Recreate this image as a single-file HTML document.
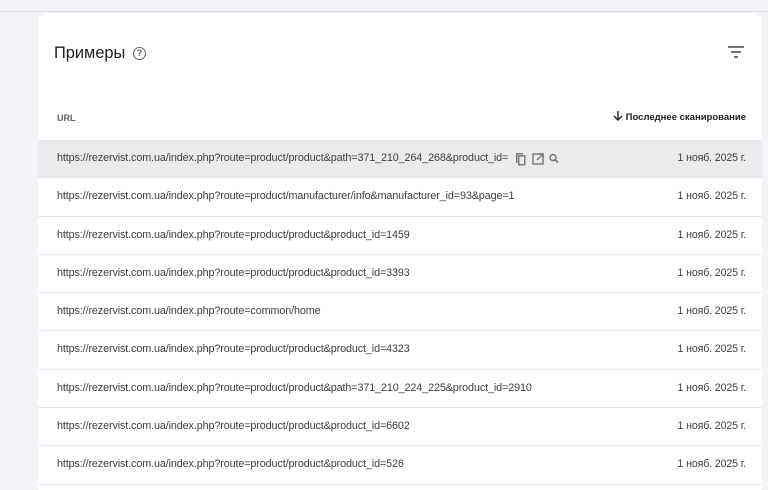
<!DOCTYPE html>
<html><head><meta charset="utf-8"><style>
*{margin:0;padding:0;box-sizing:border-box}
html,body{width:768px;height:490px;overflow:hidden}
body{background:#f1f3f6;font-family:"Liberation Sans",sans-serif;color:#202124;position:relative}
.top{position:absolute;left:0;top:0;width:768px;height:12px;border-bottom:1px solid #dadce0;background:#f1f3f6}
.card{position:absolute;left:38px;top:13px;width:724px;height:477px;background:#fff;border-radius:8px 8px 0 0;overflow:hidden}
.title{position:absolute;left:16px;top:31px;font-size:16.4px;color:#202124}
.help{position:absolute;left:95px;top:34px;width:13px;height:13px;border:1.3px solid #5f6368;border-radius:50%;font-size:9px;color:#5f6368;text-align:center;line-height:11px;font-weight:bold}
.filter{position:absolute;left:690px;top:33px}
.hurl{position:absolute;left:19px;top:100px;font-size:9px;color:#5f6368;font-weight:bold}
.hdate{position:absolute;right:16px;top:99px;font-size:9.5px;color:#202124;font-weight:bold}
.arrow{position:absolute;left:574px;top:97px}
.rows{position:absolute;left:0;top:127px;width:724px}
.row{height:38.3px;border-bottom:1px solid #e8eaed;position:relative;font-size:10.8px;letter-spacing:-0.12px;color:#3c4043}
.row span.u{position:absolute;left:19px;top:12px;white-space:nowrap}
.row span.clip{width:452px;overflow:hidden}
.row span.d{position:absolute;right:16px;top:12px;font-size:10.6px}
.hov{background:#ebebeb}
.icons{position:absolute;left:475px;top:11px}
</style></head><body>
<div class="top"></div>
<div class="card">
<div class="title">Примеры</div>
<div class="help">?</div>
<svg class="filter" width="16" height="12" viewBox="0 0 16 12"><rect x="0" y="0" width="16" height="1.8" fill="#5f6368"/><rect x="3" y="5" width="10" height="1.8" fill="#5f6368"/><rect x="6" y="10" width="4" height="1.8" fill="#5f6368"/></svg>
<div class="hurl">URL</div>
<svg class="arrow" width="12" height="12" viewBox="0 0 12 12"><path d="M6 1v9M2 6l4 4 4-4" stroke="#202124" stroke-width="1.4" fill="none"/></svg>
<div class="hdate">Последнее сканирование</div>
<div class="rows">
<div class="row hov"><span class="u clip">https://rezervist.com.ua/index.php?route=product/product&amp;path=371_210_264_268&amp;product_id=<span style="color:#bbb">2</span></span>
<svg class="icons" width="52" height="16" viewBox="0 0 52 16"><path d="M3 2h7v1.5H4.5V12H3z" fill="#777"/><rect x="5.8" y="4.8" width="6" height="9" fill="none" stroke="#777" stroke-width="1.4"/><rect x="20" y="3" width="10" height="10" fill="none" stroke="#777" stroke-width="1.4"/><path d="M24 9l6-6M26 3h4v4" stroke="#777" stroke-width="1.4" fill="none"/><circle cx="40" cy="6.5" r="3" fill="none" stroke="#777" stroke-width="1.4"/><path d="M42 8.5l3 3" stroke="#777" stroke-width="1.6"/></svg>
<span class="d">1 нояб. 2025 г.</span></div>
<div class="row"><span class="u">https://rezervist.com.ua/index.php?route=product/manufacturer/info&amp;manufacturer_id=93&amp;page=1</span><span class="d">1 нояб. 2025 г.</span></div>
<div class="row"><span class="u">https://rezervist.com.ua/index.php?route=product/product&amp;product_id=1459</span><span class="d">1 нояб. 2025 г.</span></div>
<div class="row"><span class="u">https://rezervist.com.ua/index.php?route=product/product&amp;product_id=3393</span><span class="d">1 нояб. 2025 г.</span></div>
<div class="row"><span class="u">https://rezervist.com.ua/index.php?route=common/home</span><span class="d">1 нояб. 2025 г.</span></div>
<div class="row"><span class="u">https://rezervist.com.ua/index.php?route=product/product&amp;product_id=4323</span><span class="d">1 нояб. 2025 г.</span></div>
<div class="row"><span class="u">https://rezervist.com.ua/index.php?route=product/product&amp;path=371_210_224_225&amp;product_id=2910</span><span class="d">1 нояб. 2025 г.</span></div>
<div class="row"><span class="u">https://rezervist.com.ua/index.php?route=product/product&amp;product_id=6602</span><span class="d">1 нояб. 2025 г.</span></div>
<div class="row"><span class="u">https://rezervist.com.ua/index.php?route=product/product&amp;product_id=526</span><span class="d">1 нояб. 2025 г.</span></div>
</div>
</div>
</body></html>
